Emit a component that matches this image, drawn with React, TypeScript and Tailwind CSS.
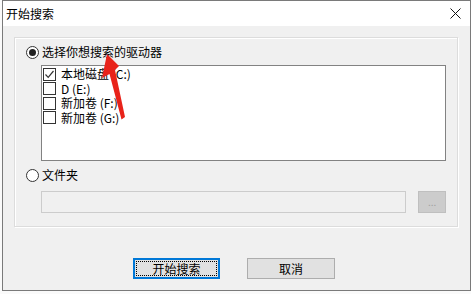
import React from "react";

const drives = [
  { label: "本地磁盘 (C:)", checked: true },
  { label: "D (E:)", checked: false },
  { label: "新加卷 (F:)", checked: false },
  { label: "新加卷 (G:)", checked: false },
];

function Radio({ on }: { on: boolean }) {
  return (
    <span className="w-[13px] h-[13px] rounded-full border border-[#333] bg-white flex items-center justify-center shrink-0">
      {on && <span className="w-[7px] h-[7px] rounded-full bg-[#222]" />}
    </span>
  );
}

function Check({ on }: { on: boolean }) {
  return (
    <span className="w-[13px] h-[13px] border border-[#333] bg-white flex items-center justify-center shrink-0">
      {on && (
        <svg width="11" height="11" viewBox="0 0 11 11">
          <polyline points="1.5,5.5 4.2,8.3 9.5,2" fill="none" stroke="#333" strokeWidth="1.2" />
        </svg>
      )}
    </span>
  );
}

export default function App() {
  return (
    <div className="relative w-[471px] h-[294px] bg-[#fafafa] font-['Noto_Sans_CJK_SC',sans-serif] text-[12px] text-black overflow-hidden">
      {/* window */}
      <div className="ml-[2px] w-[469px] h-[291px] border border-[#7a7a7a] bg-[#f0f0f0] flex flex-col">
        {/* title bar */}
        <div className="h-[25px] bg-white flex items-center justify-between pl-[3px] pr-[9px] shrink-0">
          <span className="leading-none">开始搜索</span>
          <svg width="11" height="11" viewBox="0 0 11 11">
            <path d="M0.5 0.5 L10.5 10.5 M10.5 0.5 L0.5 10.5" stroke="#111" strokeWidth="1" />
          </svg>
        </div>

        <div className="flex flex-col pl-[11px]">
          {/* group box */}
          <div className="mt-[11px] w-[444px] h-[190px] border border-[#dcdcdc] shadow-[inset_1px_1px_0_#fff,1px_1px_0_#fff] flex flex-col pl-[11px] pr-[11px]">
            <div className="mt-[6px] h-[16px] flex items-center gap-[3px]">
              <Radio on />
              <span className="leading-none">选择你想搜索的驱动器</span>
            </div>

            <div className="mt-[5px] ml-[15px] w-[405px] h-[96px] border border-[#828282] bg-white pt-[1px] pl-[1px] flex flex-col">
              {drives.map((d) => (
                <div key={d.label} className="h-[14.5px] flex items-center gap-[5px]">
                  <Check on={d.checked} />
                  <span className="block h-[14px] leading-[14px]">{d.label}</span>
                </div>
              ))}
            </div>

            <div className="mt-[6px] h-[16px] flex items-center gap-[3px]">
              <Radio on={false} />
              <span className="leading-none">文件夹</span>
            </div>

            <div className="mt-[8px] ml-[15px] flex items-center gap-[12px]">
              <div className="w-[367px] h-[22px] border border-[#cccccc] bg-[#f0f0f0]" />
              <div className="w-[28px] h-[22px] border border-[#bfbfbf] bg-[#cccccc] flex items-center justify-center text-[#a0a0a0] text-[10px] leading-none">
                ...
              </div>
            </div>
          </div>

          {/* buttons */}
          <div className="mt-[31px] flex gap-[27px] pl-[119px]">
            <div className="w-[87px] h-[21px] border-2 border-[#0078d7] bg-[#e1e1e1] p-[1px]">
              <div className="w-full h-full border border-dotted border-black flex items-center justify-center leading-none">
                开始搜索
              </div>
            </div>
            <div className="w-[88px] h-[21px] border border-[#adadad] bg-[#e1e1e1] flex items-center justify-center leading-none">
              取消
            </div>
          </div>
        </div>
      </div>

      {/* red annotation arrow */}
      <svg className="absolute left-0 top-0 pointer-events-none" width="471" height="294" viewBox="0 0 471 294">
        <polygon
          points="107,54 119,66 115,70 125,117 121.5,119.5 109.5,74 102,78"
          fill="#e8231a"
        />
      </svg>
    </div>
  );
}
